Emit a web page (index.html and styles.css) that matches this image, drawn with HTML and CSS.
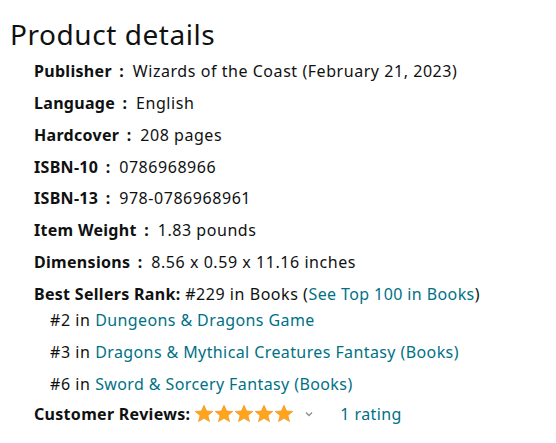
FILE: index.html
```html
<!DOCTYPE html>
<html>
<head>
<meta charset="utf-8">
<link rel="stylesheet" href="styles.css">
</head>
<body>
<div class="page">
  <h2 class="title">Product details</h2>
  <ul class="details">
    <li class="row"><span class="label">Publisher <span class="colon">:</span></span> <span>Wizards of the Coast (February 21, 2023)</span></li>
    <li class="row"><span class="label">Language <span class="colon">:</span></span> <span>English</span></li>
    <li class="row"><span class="label">Hardcover <span class="colon">:</span></span> <span>208 pages</span></li>
    <li class="row"><span class="label">ISBN-10 <span class="colon">:</span></span> <span>0786968966</span></li>
    <li class="row"><span class="label">ISBN-13 <span class="colon">:</span></span> <span>978-0786968961</span></li>
    <li class="row"><span class="label">Item Weight <span class="colon">:</span></span> <span>1.83 pounds</span></li>
    <li class="row"><span class="label">Dimensions <span class="colon">:</span></span> <span>8.56 x 0.59 x 11.16 inches</span></li>
  </ul>
  <div class="rank">
    <div class="rank-main"><span class="label">Best Sellers Rank:</span> #229 in Books (<a class="link" href="#">See Top 100 in Books</a>)</div>
    <ul class="rank-list">
      <li>#2 in <a class="link" href="#">Dungeons &amp; Dragons Game</a></li>
      <li>#3 in <a class="link" href="#">Dragons &amp; Mythical Creatures Fantasy (Books)</a></li>
      <li>#6 in <a class="link" href="#">Sword &amp; Sorcery Fantasy (Books)</a></li>
    </ul>
  </div>
  <div class="reviews">
    <span class="label">Customer Reviews:</span>
    <span class="stars">
      <svg width="100" height="20" viewBox="0 0 100 20">
        <defs>
          <path id="st" d="M10 1.2 L12.6 7 L18.8 7.4 L14 11.4 L15.5 17.6 L10 14.3 L4.5 17.6 L6 11.4 L1.2 7.4 L7.4 7 Z"/>
        </defs>
        <use href="#st" x="0" fill="#FFA41C" stroke="#E88F10" stroke-width="0.6"/>
        <use href="#st" x="20" fill="#FFA41C" stroke="#E88F10" stroke-width="0.6"/>
        <use href="#st" x="40" fill="#FFA41C" stroke="#E88F10" stroke-width="0.6"/>
        <use href="#st" x="60" fill="#FFA41C" stroke="#E88F10" stroke-width="0.6"/>
        <use href="#st" x="80" fill="#FFA41C" stroke="#E88F10" stroke-width="0.6"/>
      </svg>
    </span>
    <svg class="chev" width="10" height="8" viewBox="0 0 10 8"><path d="M2 2.5 L5 5.5 L8 2.5" fill="none" stroke="#8a9090" stroke-width="1.3"/></svg>
    <a class="link rating" href="#">1 rating</a>
  </div>
</div>
</body>
</html>
```
FILE: styles.css
```css
html, body {
  margin: 0;
  padding: 0;
  background: #ffffff;
}
body {
  font-family: "Noto Sans", "Open Sans", sans-serif;
  color: #0F1111;
  font-size: 16px;
  letter-spacing: 0.55px;
}
.page {
  padding: 16px 10px 0 10px;
}
.title {
  margin: 0;
  font-weight: 400;
  font-size: 28px;
  letter-spacing: 0.55px;
  line-height: 36px;
}
.details {
  list-style: none;
  margin: 0;
  padding: 0 0 0 24px;
}
.row {
  height: 31.85px;
  line-height: 22px;
  padding-top: 8px;
  box-sizing: border-box;
}
.label {
  font-weight: 700;
  letter-spacing: 0.3px;
}
.colon {
  margin: 0 4px 0 3px;
}
.rank {
  padding-left: 24px;
  margin-top: 8px;
}
.rank-main {
  line-height: 22px;
}
.link {
  color: #007185;
  text-decoration: none;
  letter-spacing: 0.4px;
}
.rank-list {
  list-style: none;
  margin: 0;
  padding: 0 0 0 16px;
}
.rank-list li {
  line-height: 22px;
  margin-top: 10px;
}
.rank-list li:first-child { margin-top: 4px; }
.reviews {
  padding-left: 24px;
  margin-top: 8px;
  display: flex;
  align-items: center;
  line-height: 22px;
}
.stars {
  display: inline-flex;
  margin-left: 4px;
}
.chev {
  margin-left: 10px;
}
.rating {
  margin-left: 26px;
}
```
